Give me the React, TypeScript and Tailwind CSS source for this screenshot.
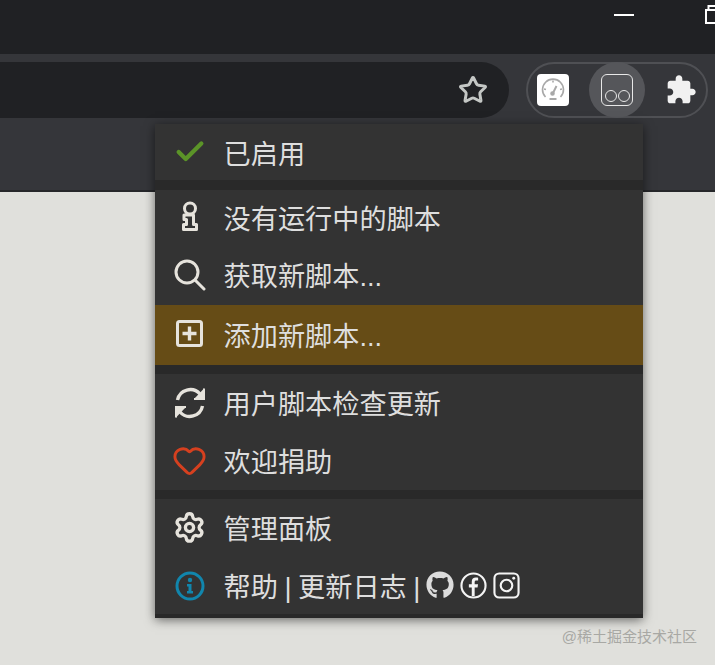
import { Heart, Settings, Star, Check } from 'lucide-react';
import { FaGithub } from 'react-icons/fa';
import type { ReactNode } from 'react';

const fonts = '"Liberation Sans", "Noto Sans CJK SC", sans-serif';

function Row({ icon, children, className, textClass = 'pt-[4px]' }: { icon: ReactNode; children: ReactNode; className: string; textClass?: string }) {
  return (
    <div className={`flex items-center text-[27.2px] leading-none text-[#dedede] ${className}`}>
      <div className="flex w-[68.5px] shrink-0 justify-center pl-[1px]">{icon}</div>
      <div className={`flex items-center whitespace-nowrap ${textClass}`}>{children}</div>
    </div>
  );
}

function KeyInfo() {
  return (
    <svg className="mb-[3px]" width="20" height="30" viewBox="0 0 20 30" fill="none" stroke="#e6e3dc" strokeWidth="3" strokeLinejoin="round">
      <circle cx="10" cy="7.500" r="5.500" />
      <path d="M4 14h9.500v9.500h3v5h-13v-5h3v-5h-2.500z" />
    </svg>
  );
}

function SearchIcon() {
  return (
    <svg width="32" height="32" viewBox="0 0 32 32" fill="none" stroke="#e6e3dc" strokeWidth="3" strokeLinecap="round">
      <circle cx="13" cy="13" r="11" />
      <path d="M21 21l9 9" />
    </svg>
  );
}

function PlusSquare() {
  return (
    <svg className="mb-[3px]" width="27" height="27" viewBox="0 0 27 27" fill="none" stroke="#e6e3dc" strokeWidth="3">
      <rect x="1.500" y="1.500" width="24" height="24" rx="2" />
      <path d="M13.500 6.500v14M6.500 13.500h14" strokeWidth="3.400" />
    </svg>
  );
}

function Sync() {
  return (
    <svg width="32" height="32" viewBox="0 0 32 32" fill="none" stroke="#e6e3dc" strokeWidth="3.400">
      <path d="M3.500 13A13 13 0 0 1 26 7l3 3" />
      <path d="M30 1.500V12H20" fill="#e6e3dc" strokeWidth="2" />
      <path d="M28.500 19A13 13 0 0 1 6 25l-3-3" />
      <path d="M2 30.500V20h10" fill="#e6e3dc" strokeWidth="2" />
    </svg>
  );
}

function InfoCircle() {
  return (
    <svg width="30" height="30" viewBox="0 0 30 30" fill="none">
      <circle cx="15" cy="15" r="13" stroke="#1186ad" strokeWidth="3" />
      <circle cx="15" cy="9" r="2.200" fill="#1186ad" />
      <path d="M12 13h4.500v7H18v2.500h-6V20h1.500v-4.500H12z" fill="#1186ad" />
    </svg>
  );
}

function FacebookCircle() {
  return (
    <svg width="27" height="27" viewBox="0 0 28 28" fill="none">
      <circle cx="14" cy="14" r="12.500" stroke="#f4f4f4" strokeWidth="2.200" />
      <path d="M15.200 25v-9h3l.5-3.400h-3.500v-2c0-1.100.4-1.800 1.900-1.800h1.700V5.900c-.6-.1-1.500-.2-2.400-.2-2.600 0-4.200 1.500-4.200 4.300v2.600h-3V16h3v9z" fill="#f4f4f4" />
    </svg>
  );
}

function Instagram() {
  return (
    <svg width="27" height="27" viewBox="0 0 28 28" fill="none" stroke="#f4f4f4" strokeWidth="2.200">
      <rect x="1.500" y="1.500" width="25" height="25" rx="5" />
      <circle cx="14" cy="14" r="6" />
      <circle cx="21.500" cy="6.500" r="1.500" fill="#f4f4f4" stroke="none" />
    </svg>
  );
}

function Gauge() {
  return (
    <svg width="24" height="24" viewBox="0 0 24 24" fill="none" stroke="#a8a8a8" strokeWidth="1.600">
      <path d="M4.500 19A10.500 10.500 0 1 1 19.500 19" />
      <path d="M12 15l3.500-7" strokeWidth="2" />
      <circle cx="11.500" cy="15.500" r="1.500" fill="#a8a8a8" />
      <path d="M8.500 21h7" strokeWidth="2" />
      <path d="M3 11l2 .5M21 11l-2 .5M12 2.500v2" />
    </svg>
  );
}

function Restore() {
  return (
    <svg width="10" height="20" viewBox="0 0 10 20" fill="none" stroke="#ffffff" strokeWidth="2">
      <path d="M3.500 4V1H10" />
      <path d="M10 5H1v13h9" />
    </svg>
  );
}

function PuzzleIcon() {
  return (
    <svg width="32" height="32" viewBox="0 0 24 24" fill="#f1f1f1">
      <path d="M20.500 11H19V7c0-1.100-.9-2-2-2h-4V3.500C13 2.120 11.880 1 10.500 1S8 2.120 8 3.500V5H4c-1.100 0-1.990.9-1.990 2v3.800H3.500c1.490 0 2.700 1.210 2.700 2.700s-1.210 2.700-2.700 2.700H2V20c0 1.100.9 2 2 2h3.800v-1.500c0-1.490 1.210-2.700 2.700-2.700 1.490 0 2.700 1.210 2.700 2.700V22H17c1.100 0 2-.9 2-2v-4h1.500c1.380 0 2.500-1.120 2.500-2.500S21.880 11 20.500 11z" />
    </svg>
  );
}

export default function App() {
  return (
    <div className="relative h-[665px] w-[715px] overflow-hidden bg-[#e0e0dc]" style={{ fontFamily: fonts }}>
      {/* tab strip */}
      <div className="flex h-[54px] items-start bg-[#202124]">
        <div className="ml-[614px] mt-[14px] h-[2px] w-[20px] bg-white" />
        <div className="ml-[71px] mt-[5px] flex">
          <Restore />
        </div>
      </div>

      {/* toolbar */}
      <div className="h-[136px] bg-[#35363a] pt-[8px]">
        <div className="flex h-[56px] items-center">
          <div className="flex h-[56px] w-[509px] items-center justify-end rounded-r-[28px] bg-[#202124] pr-[21px]">
            <Star size={30} color="#c4c7c5" strokeWidth={2.400} />
          </div>
          <div className="ml-[17px] flex h-[56px] w-[182px] items-center rounded-[28px] border-2 border-[#4f5054] pl-[9px]">
            <div className="flex h-[32px] w-[32px] items-center justify-center rounded-[4px] bg-white">
              <Gauge />
            </div>
            <div className="ml-[20px] flex h-[56px] w-[56px] shrink-0 items-center justify-center rounded-full bg-[#55565a]">
              <div className="flex h-[32px] w-[32px] items-end justify-center gap-[1px] rounded-[6px] border border-[#e8e8e8] pb-[3px]">
                <div className="h-[12px] w-[12px] rounded-full border border-[#e8e8e8]" />
                <div className="h-[12px] w-[12px] rounded-full border border-[#e8e8e8]" />
              </div>
            </div>
            <div className="ml-[20px] flex">
              <PuzzleIcon />
            </div>
          </div>
        </div>
      </div>
      <div className="h-[2px] bg-[#26272a]" />

      {/* popup menu */}
      <div className="absolute left-[155px] top-[124px] w-[488px] bg-[#292929] pb-[4px] shadow-[0_2px_10px_rgba(0,0,0,0.55)]">
        <Row className="h-[56px] bg-[#333333]" textClass="pt-[6px]" icon={<Check size={34} color="#5b9428" strokeWidth={3} />}>已启用</Row>
        <div className="h-[10px]" />
        <Row className="h-[58px] bg-[#333333] pb-[3px]" icon={<KeyInfo />}>没有运行中的脚本</Row>
        <Row className="h-[57px] bg-[#333333] pb-[3px]" icon={<SearchIcon />}>获取新脚本...</Row>
        <Row className="h-[60px] bg-[#664c16]" icon={<PlusSquare />}>添加新脚本...</Row>
        <div className="h-[9px]" />
        <Row className="h-[58px] bg-[#333333] pb-[1px]" icon={<Sync />}>用户脚本检查更新</Row>
        <Row className="h-[58px] bg-[#333333] pb-[1px]" icon={<Heart size={35} color="#d6401f" strokeWidth={2} />}>欢迎捐助</Row>
        <div className="h-[9px]" />
        <Row className="h-[58px] bg-[#333333] pb-[1px]" icon={<Settings size={33} color="#e6e3dc" strokeWidth={2.400} />}>管理面板</Row>
        <Row className="h-[57px] bg-[#333333]" textClass="" icon={<InfoCircle />}>
          <span className="pt-[4px] [word-spacing:-1px]">帮助 | 更新日志 |</span>
          <span className="ml-[6px] flex items-center gap-[6px]">
            <FaGithub size={28} color="#dcdcdc" />
            <FacebookCircle />
            <Instagram />
          </span>
        </Row>
      </div>

      <div className="absolute bottom-[21px] right-[18px] text-[15px] leading-none text-[#a8a8a4]">@稀土掘金技术社区</div>
    </div>
  );
}
